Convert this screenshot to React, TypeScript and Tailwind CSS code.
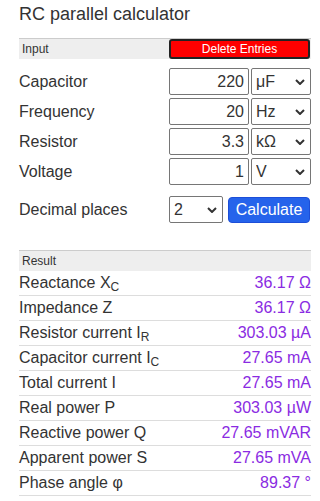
import React from "react";

const Chevron = () => (
  <svg
    className="pointer-events-none absolute right-[6px] top-1/2 -translate-y-1/2"
    width="10"
    height="6"
    viewBox="0 0 10 6"
  >
    <path d="M1 1l4 4 4-4" stroke="#333" strokeWidth="2" fill="none" />
  </svg>
);

const inputs = [
  { label: "Capacitor", value: "220", unit: "μF", units: ["pF", "nF", "μF", "mF", "F"] },
  { label: "Frequency", value: "20", unit: "Hz", units: ["Hz", "kHz", "MHz"] },
  { label: "Resistor", value: "3.3", unit: "kΩ", units: ["Ω", "kΩ", "MΩ"] },
  { label: "Voltage", value: "1", unit: "V", units: ["mV", "V", "kV"] },
];

const results: { label: React.ReactNode; value: string }[] = [
  { label: <>Reactance X<sub>C</sub></>, value: "36.17 Ω" },
  { label: "Impedance Z", value: "36.17 Ω" },
  { label: <>Resistor current I<sub>R</sub></>, value: "303.03 µA" },
  { label: <>Capacitor current I<sub>C</sub></>, value: "27.65 mA" },
  { label: "Total current I", value: "27.65 mA" },
  { label: "Real power P", value: "303.03 µW" },
  { label: "Reactive power Q", value: "27.65 mVAR" },
  { label: "Apparent power S", value: "27.65 mVA" },
  { label: "Phase angle φ", value: "89.37 °" },
];

export default function App() {
  return (
    <div className="ml-[19px] w-[292px] font-['Liberation_Sans',Arial,sans-serif] text-[#333]">
      <h1 className="pt-[3px] text-[18px] leading-[22px] font-normal">RC parallel calculator</h1>

      {/* Input header */}
      <div className="mt-[13px] flex h-[21px] items-center border-t border-[#ccc] bg-[#eee]">
        <div className="w-[150px] pl-[3px] text-[12px]">Input</div>
        <button className="h-[20px] w-[141px] rounded-[3px] border-2 border-[#222] bg-[#ff0000] text-[12px] leading-none text-white">
          Delete Entries
        </button>
      </div>

      <div className="mt-[9px] flex flex-col gap-[3px]">
        {inputs.map((row) => (
          <div key={row.label} className="flex h-[27px] items-center">
            <div className="w-[150px] text-[16px]">{row.label}</div>
            <input
              className="h-[27px] w-[80px] rounded-[2px] border border-[#767676] pr-[4px] text-right text-[16px]"
              defaultValue={row.value}
            />
            <div className="relative ml-[2px] h-[27px] w-[60px]">
              <select
                className="h-full w-full appearance-none rounded-[2px] border border-[#767676] pl-[4px] text-[16px]"
                defaultValue={row.unit}
              >
                {row.units.map((u) => (
                  <option key={u}>{u}</option>
                ))}
              </select>
              <Chevron />
            </div>
          </div>
        ))}
      </div>

      <div className="mt-[11px] flex h-[27px] items-center">
        <div className="w-[150px] text-[16px]">Decimal places</div>
        <div className="relative h-[27px] w-[54px]">
          <select
            className="h-full w-full appearance-none rounded-[2px] border border-[#767676] pl-[4px] text-[16px]"
            defaultValue="2"
          >
            {["0", "1", "2", "3", "4", "5", "6"].map((d) => (
              <option key={d}>{d}</option>
            ))}
          </select>
          <Chevron />
        </div>
        <button className="ml-[5px] h-[26px] w-[82px] rounded-[4px] border border-[#1d4ed8] bg-[#2563eb] text-[16px] text-white">
          Calculate
        </button>
      </div>

      {/* Result */}
      <div className="mt-[27px] flex h-[21px] items-center border-t border-[#ccc] bg-[#eee] pl-[3px] text-[12px]">
        Result
      </div>
      {results.map((r, i) => (
        <div key={i} className="flex h-[25px] items-center justify-between border-b border-[#ddd] text-[16px]">
          <div>{r.label}</div>
          <div className="text-[#8a2be2]">{r.value}</div>
        </div>
      ))}
    </div>
  );
}
